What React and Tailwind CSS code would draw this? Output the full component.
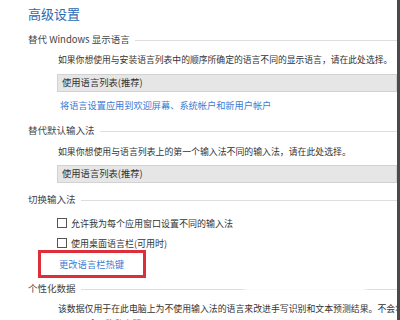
import React from "react";

const font = { fontFamily: '"Noto Sans CJK SC", "Noto Sans", sans-serif' };

function Section({ children, h, extra = "" }) {
  return (
    <div className={`flex shrink-0 items-center ${h} ${extra}`}>
      <span className="text-[9.5px] leading-none text-[#444] whitespace-nowrap">{children}</span>
      <div className="ml-[5px] h-px flex-1 bg-[#dedede]" />
    </div>
  );
}

function Dropdown() {
  return (
    <div className="ml-[29px] flex h-[18px] shrink-0 items-center border border-[#d2d2d2] bg-[#e6e6e6] pl-[4px]">
      <span className="text-[9.3px] leading-none text-[#333] whitespace-nowrap">使用语言列表(推荐)</span>
    </div>
  );
}

function Check({ children, h, extra = "" }) {
  return (
    <div className={`ml-[29px] flex shrink-0 items-center ${h} ${extra}`}>
      <div className="h-[10px] w-[10px] border border-[#555] bg-white" />
      <span className="ml-[4px] text-[9px] leading-none text-[#333] whitespace-nowrap">{children}</span>
    </div>
  );
}

export default function App() {
  return (
    <div className="flex h-[320px] w-[400px] overflow-hidden bg-white" style={font}>
      <div className="relative flex min-w-0 flex-1 flex-col overflow-hidden pl-[28px] pr-0 [&>*]:shrink-0">
        <div className="flex h-[26px] items-center">
          <span className="text-[13px] leading-none text-[#2d67b2] whitespace-nowrap">高级设置</span>
        </div>
        <Section h="h-[28px]">替代 Windows 显示语言</Section>
        <div className="ml-[30px] flex h-[12px] items-center">
          <span className="text-[8.8px] leading-none text-[#333] whitespace-nowrap">
            如果你想使用与安装语言列表中的顺序所确定的语言不同的显示语言，请在此处选择。
          </span>
        </div>
        <div className="mt-[8px]">
          <Dropdown />
        </div>
        <div className="ml-[32px] flex h-[28px] items-center">
          <span className="text-[9.2px] leading-none text-[#3a7bd4] whitespace-nowrap">
            将语言设置应用到欢迎屏幕、系统帐户和新用户帐户
          </span>
        </div>
        <Section h="h-[22px]">替代默认输入法</Section>
        <div className="ml-[30px] flex h-[20px] items-center">
          <span className="text-[8.9px] leading-none text-[#333] whitespace-nowrap">
            如果你想使用与语言列表上的第一个输入法不同的输入法，请在此处选择。
          </span>
        </div>
        <div className="mt-[3px]">
          <Dropdown />
        </div>
        <Section h="h-[28px]" extra="mt-[3px]">切换输入法</Section>
        <Check h="h-[18px]">允许我为每个应用窗口设置不同的输入法</Check>
        <Check h="h-[18px]" extra="mt-[2px]">使用桌面语言栏(可用时)</Check>
        <div className="relative ml-[31px] flex h-[26px] items-center">
          <span className="text-[9.3px] leading-none text-[#3a7bd4] whitespace-nowrap">更改语言栏热键</span>
          <div className="absolute left-[-21px] top-[-2px] h-[28px] w-[108px] border-[3px] border-[#dc2f3b]" />
        </div>
        <Section h="h-[22px]">个性化数据</Section>
        <div className="ml-[30px] flex h-[18px] items-center">
          <span className="text-[8.9px] leading-none text-[#333] whitespace-nowrap">
            该数据仅用于在此电脑上为不使用输入法的语言来改进手写识别和文本预测结果。不会将任何信息发送到
          </span>
        </div>
        <div className="ml-[30px] flex h-[12px] items-center">
          <span className="text-[8.9px] leading-none text-[#333] whitespace-nowrap">
            Microsoft。<span className="text-[#3a7bd4]">隐私声明</span>
          </span>
        </div>
        <div className="absolute left-[244px] top-[282px] h-[13px] w-[122px] rounded-full bg-white/90 blur-[2px]" />
      </div>
      <div className="w-[3px] shrink-0 bg-[#4a4a4a]" />
    </div>
  );
}
